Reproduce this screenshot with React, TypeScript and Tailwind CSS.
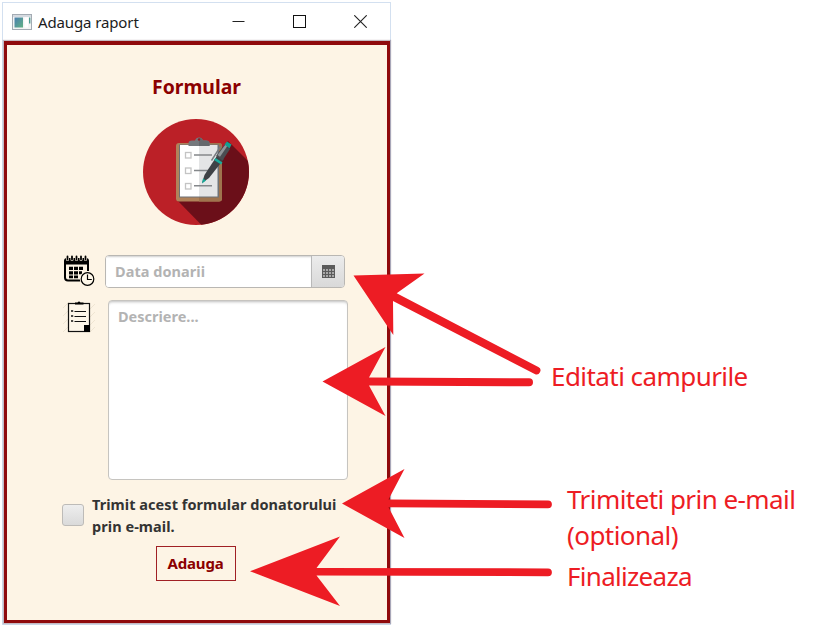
import React from "react";

function AppIcon() {
  return (
    <svg width="20" height="16" viewBox="0 0 20 16" className="shrink-0">
      <defs>
        <linearGradient id="pane" x1="0" y1="0" x2="1" y2="1">
          <stop offset="0" stopColor="#4a7fb0" />
          <stop offset="1" stopColor="#62b184" />
        </linearGradient>
      </defs>
      <rect x="0.5" y="0.5" width="19" height="15" fill="#f4f4f4" stroke="#a3abb3" />
      <rect x="1" y="1" width="18" height="2" fill="#d5dae0" />
      <rect x="2.5" y="3.5" width="8.5" height="10" fill="url(#pane)" />
      <rect x="12.5" y="3.5" width="3.5" height="10" fill="#fff" />
      <rect x="17" y="3.5" width="1.4" height="6" fill="#4f9c92" />
    </svg>
  );
}

function TitleBar() {
  return (
    <header className="flex h-[38px] items-center bg-white pl-[9px]">
      <AppIcon />
      <h1 className="ml-[6px] whitespace-nowrap text-[15px] leading-5 tracking-[-0.12px] text-[#1c1c1c]">
        Adauga raport
      </h1>
      <div className="ml-auto flex items-center gap-[48px] pr-[23px] pb-[1px]">
        <svg width="13" height="13" viewBox="0 0 13 13">
          <path d="M0.500 6.5h12" stroke="#222" strokeWidth="1" />
        </svg>
        <svg width="13" height="13" viewBox="0 0 13 13">
          <rect x="0.5" y="0.5" width="12" height="12" fill="none" stroke="#111" />
        </svg>
        <svg width="13" height="13" viewBox="0 0 13 13">
          <path d="M0.3 0.3l12.4 12.4M12.7 0.3L0.3 12.7" stroke="#222" strokeWidth="1.1" />
        </svg>
      </div>
    </header>
  );
}

function ClipboardBadge() {
  return (
    <svg width="106" height="106" viewBox="0 0 106 106">
      <defs>
        <clipPath id="disc">
          <circle cx="53" cy="53" r="53" />
        </clipPath>
      </defs>
      <g clipPath="url(#disc)">
        <rect width="106" height="106" fill="#bb2027" />
        <path d="M85 22L130 67V130H82L34 81Z" fill="#6b0f19" />
      </g>
      <rect x="33" y="24" width="46" height="58.5" rx="3" fill="#b0835a" />
      <path d="M56 24h20a3 3 0 0 1 3 3v52.500a3 3 0 0 1-3 3H56z" fill="#9f744e" />
      <rect x="36" y="25.500" width="40" height="53" fill="#6f7378" />
      <rect x="37" y="26" width="19" height="51.500" fill="#fff" />
      <rect x="56" y="26" width="18.500" height="51.500" fill="#e4e5e6" />
      <path d="M45.500 27v-3q0-2.500 3.500-2.500h3q1-3 4-3t4 3h3q3.500 0 3.500 2.500v3z" fill="#75797d" />
      <path d="M56 18.500q3 0 4 3h3q3.500 0 3.500 2.500v3H56z" fill="#64686c" />
      <circle cx="56" cy="20.500" r="1.200" fill="#8a2028" />
      <g fill="#fff" stroke="#c4c4c4" strokeWidth="1.300">
        <rect x="42.500" y="33.500" width="5.500" height="5.500" />
        <rect x="42.500" y="49" width="5.500" height="5.500" />
        <rect x="42.500" y="64.500" width="5.500" height="5.500" />
      </g>
      <path d="M51 36h18M51 51.500h15M51 66.800h18" stroke="#85888b" strokeWidth="1.500" />
      <path d="M59 64l2.500-8 13-20 6.500 4-15 19z" fill="#3f4246" />
      <path d="M73 37l8-11 6 4-7.500 11.500z" fill="#4a4d52" />
      <path d="M74.500 36l8-10.500 2 1.300-7.500 11z" fill="#92969a" />
      <path d="M81.500 25.500l2.500-3 4.500 3-2 4z" fill="#12a192" />
      <path d="M72.500 39l7 4.500-1.500 2-7-4.500z" fill="#18ad9d" />
      <path d="M59 64.500l1-5 3 2z" fill="#13a796" />
      <path d="M68.500 41.500l9-14" stroke="#777b80" strokeWidth="1.400" />
    </svg>
  );
}

function CalendarClockIcon() {
  return (
    <svg width="32" height="31" viewBox="0 0 32 31" className="shrink-0">
      <path d="M2 9v13.500q0 3 3 3h13M25 9v7" fill="none" stroke="#000" strokeWidth="2" />
      <path d="M1 9.500V6q0-3 3-3h19q3 0 3 3v3.500z" fill="#000" />
      <g stroke="#fdf4e3" strokeWidth="3" strokeLinecap="round">
        <path d="M4.500 1.500v3M9 1.500v3M13.500 1.500v3M18 1.500v3M22.500 1.500v3" />
      </g>
      <g stroke="#000" strokeWidth="1.800" strokeLinecap="round">
        <path d="M4.500 1.500v3M9 1.500v3M13.500 1.500v3M18 1.500v3M22.500 1.500v3" />
      </g>
      <path
        d="M6 11.800h4v3.200H6zM11 11.800h4v3.200h-4zM16 11.800h4v3.200h-4zM6 16.200h4v3.200H6zM11 16.200h4v3.200h-4zM16 16.200h3v3h-3zM6 20.500h4v2.800H6zM11 20.500h4v2.800h-4z"
        fill="#000"
      />
      <circle cx="24.500" cy="24" r="7.700" fill="#fdf4e3" />
      <circle cx="24.500" cy="24" r="6.300" fill="#fff8ea" stroke="#000" strokeWidth="1.200" />
      <path d="M24.500 19.500v5h4.300" fill="none" stroke="#000" strokeWidth="1.200" />
    </svg>
  );
}

function NoteIcon() {
  return (
    <svg width="32" height="33" viewBox="0 0 32 33" className="shrink-0">
      <path
        d="M0 8l6-6M0 16l5-5M0 24l5-5M0 32l5-5M27 9l5-5M27 17l5-5M27 25l5-5M27 32l5-5"
        stroke="#efe5d3"
        strokeWidth="1"
      />
      <rect x="5.500" y="3.500" width="21" height="28" fill="#fdf6e9" stroke="#111" strokeWidth="1.200" />
      <path d="M12 4.500V2.500h2.500q1.500-1.800 3 0H20.500v2z" fill="#000" />
      <path d="M11.500 11.500H23M11.500 16.500H23M11.500 21.500H23" stroke="#111" strokeWidth="1.100" />
      <path d="M8 11h2.200M8 16h2.200M8 21h2.200" stroke="#111" strokeWidth="1.500" />
      <rect x="21" y="25" width="6" height="7" fill="#000" />
    </svg>
  );
}

function PickerIcon() {
  return (
    <svg width="13" height="13" viewBox="0 0 13 13">
      <rect width="13" height="13" fill="#5b5b5b" />
      <g fill="#a8a8a8">
        {[4, 7, 10].map((y) =>
          [1, 4, 7, 10].map((x) => <rect key={`${x}-${y}`} x={x} y={y} width="2" height="2" />),
        )}
      </g>
    </svg>
  );
}

function ReportWindow() {
  return (
    <section className="mt-[2px] ml-[2px] h-[623px] w-[389px] shrink-0 border border-[#d3e0f0]">
      <TitleBar />
      <main className="ml-[1px] flex h-[582px] w-[386px] flex-col border-[3px] border-t-4 border-[#8f0a0c] bg-[#fdf4e5] shadow-[0_0_1px_1px_rgba(90,60,80,0.35)]">
        <h2 className="mt-[29px] pr-[1px] text-center text-[19.400px] leading-[26px] font-bold text-[#8b0000]">
          <span className="whitespace-nowrap">Formular</span>
        </h2>
        <div className="mt-[19px] ml-[136px]">
          <ClipboardBadge />
        </div>
        <div className="mt-[30px] ml-[56px] flex">
          <CalendarClockIcon />
          <div className="ml-[10px] flex h-[33px] w-[240px] overflow-hidden rounded-[4px] border border-[#b9b7b3] bg-white">
            <div className="flex-1 bg-white pl-[9px] text-[14.5px] leading-[31px] font-bold tracking-[0.05px] whitespace-nowrap text-[#b3b3b3] shadow-[inset_0_2px_2px_-1px_#cfcfcf]">
              Data donarii
            </div>
            <div className="flex w-[33px] items-center justify-center border-l border-[#b9b9b9] bg-linear-to-b from-[#ececec] to-[#d9d9d9]">
              <PickerIcon />
            </div>
          </div>
        </div>
        <div className="mt-[12px] ml-[56px] flex">
          <NoteIcon />
          <div className="ml-[13px] h-[180px] w-[240px] rounded-[4px] border border-[#c6c4c0] bg-white pl-[9px] text-[14.500px] leading-[31px] font-bold whitespace-nowrap text-[#b3b3b3] shadow-[inset_0_3px_3px_-2px_#bdbdbd]">
            Descriere...
          </div>
        </div>
        <div className="mt-[14px] ml-[55px] flex">
          <div className="mt-[10px] h-[22px] w-[22px] rounded-[3px] border border-[#bdbbb8] bg-linear-to-b from-[#eeeeee] to-[#dadada]" />
          <p className="ml-[8px] text-[14.500px] leading-[21.500px] font-bold tracking-[0.050px] whitespace-nowrap text-[#333]">
            Trimit acest formular donatorului
            <br />
            prin e-mail.
          </p>
        </div>
        <div className="mt-[9px] ml-[149px] flex h-[35px] w-[80px] items-center justify-center border border-[#a02024] pr-[1px] text-[15px] font-bold tracking-[-0.150px] whitespace-nowrap text-[#8b0000]">
          Adauga
        </div>
      </main>
    </section>
  );
}

function Notes() {
  return (
    <aside className="flex flex-col pt-[358px] pl-[160px] text-[26px] leading-[36px] tracking-[-0.560px] whitespace-nowrap text-[#ed1c24]">
      <p>Editati campurile</p>
      <p className="mt-[87px] ml-[16px]">Trimiteti prin e-mail</p>
      <p className="ml-[16px]">(optional)</p>
      <p className="mt-[5px] ml-[16px] tracking-[-0.700px]">Finalizeaza</p>
    </aside>
  );
}

function Arrows() {
  return (
    <svg
      width="821"
      height="629"
      viewBox="0 0 821 629"
      className="pointer-events-none absolute top-0 left-0"
      fill="#ed1c24"
    >
      <path d="M353.500 275.500L424.500 273.500L396.700 293.300L538.300 367a3.800 3.800 0 0 1-3.600 6.900L393 301L393.300 335Z" />
      <path d="M322.500 381.500L385.500 347L369 377.500L529 378.300a4 4 0 0 1 0 8L369 385.500L385.500 416Z" />
      <path d="M342 503.500L404.500 469L388.500 499.600L548 500.400a3.900 3.900 0 0 1 0 7.800L388.500 507.200L404.500 538Z" />
      <path d="M250 571.300L340 536.500L316.500 568L548 568.400a3.900 3.900 0 0 1 0 7.800L316.500 575.500L340 606Z" />
    </svg>
  );
}

export default function App() {
  return (
    <div className="relative flex h-[629px] w-[821px] items-start overflow-hidden bg-white font-['Noto_Sans','Open_Sans',sans-serif]">
      <ReportWindow />
      <Notes />
      <Arrows />
    </div>
  );
}
